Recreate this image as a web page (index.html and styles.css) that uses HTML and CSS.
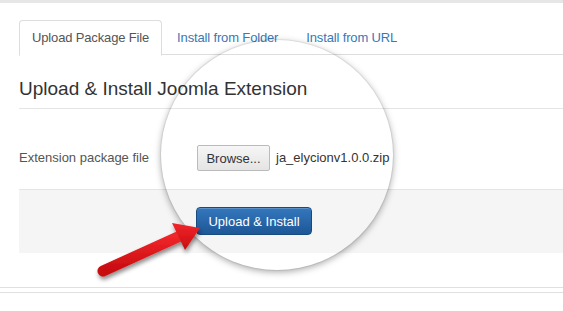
FILE: index.html
```html
<!DOCTYPE html>
<html lang="en">
<head>
    <meta charset="UTF-8">
    <meta name="viewport" content="width=device-width, initial-scale=1.0">
    <title>Extensions: Install</title>
    <link rel="stylesheet" href="styles.css">
</head>
<body>
    <div class="topbar"></div>

    <div class="content">
        <ul class="nav-tabs">
            <li class="active"><a href="#package">Upload Package File</a></li>
            <li><a href="#folder">Install from Folder</a></li>
            <li><a href="#url">Install from URL</a></li>
        </ul>

        <form class="install-form">
            <h2 class="legend">Upload &amp; Install Joomla Extension</h2>

            <div class="control-group">
                <label for="installPackage">Extension package file</label>
                <div class="controls">
                    <button type="button" class="btn">Browse...</button>
                    <span class="file-name">ja_elycionv1.0.0.zip</span>
                </div>
            </div>

            <div class="form-actions">
                <button type="submit" class="btn-primary">Upload &amp; Install</button>
            </div>
        </form>
    </div>

    <div class="footer-lines"></div>

    <!-- magnifier + arrow lie over the form -->
    <div class="magnifier"></div>
    <svg class="arrow" width="130" height="90" viewBox="0 0 130 90">
        <defs>
            <filter id="arrowShadow" x="-20%" y="-20%" width="140%" height="150%">
                <feDropShadow dx="1" dy="3" stdDeviation="2" flood-color="#000" flood-opacity="0.45"/>
            </filter>
            <linearGradient id="arrowFill" x1="0" y1="0" x2="0" y2="1">
                <stop offset="0" stop-color="#f0262a"/>
                <stop offset="1" stop-color="#c80c10"/>
            </linearGradient>
        </defs>
        <g filter="url(#arrowShadow)">
            <line x1="13" y1="71" x2="90" y2="36" stroke="url(#arrowFill)" stroke-width="11" stroke-linecap="round"/>
            <polygon points="82,23 110,28 95,50" fill="url(#arrowFill)"/>
        </g>
    </svg>
</body>
</html>
```

FILE: styles.css
```css
* {
    box-sizing: border-box;
    margin: 0;
    padding: 0;
}

body {
    font-family: "Liberation Sans", Arial, sans-serif;
    font-size: 13px;
    line-height: 18px;
    color: #333;
    background-color: #fff;
    width: 563px;
    height: 311px;
    overflow: hidden;
    position: relative;
}

.topbar {
    height: 3px;
    background-color: #e6e6e6;
}

.content {
    padding-left: 19px;
    padding-top: 17px;
}

.nav-tabs {
    list-style: none;
    display: flex;
    border-bottom: 1px solid #ddd;
    height: 35px;
}

.nav-tabs li {
    margin-right: 2px;
    margin-bottom: -1px;
}

.nav-tabs a {
    display: block;
    padding: 8px 12px;
    line-height: 18px;
    letter-spacing: -0.15px;
    border: 1px solid transparent;
    border-radius: 4px 4px 0 0;
    color: #3a77b5;
    text-decoration: none;
}

.nav-tabs .active a {
    color: #555;
    background-color: #fff;
    border-color: #ddd #ddd transparent;
}

.legend {
    font-size: 19px;
    font-weight: normal;
    color: #333;
    line-height: 24px;
    margin-top: 22px;
    padding-bottom: 7px;
    border-bottom: 1px solid #e5e5e5;
}

.control-group {
    display: flex;
    align-items: center;
    margin-top: 36px;
    margin-bottom: 18px;
}

.control-group label {
    width: 178px;
    color: #555;
}

.controls {
    display: flex;
    align-items: center;
    gap: 6px;
}

.btn {
    font-family: inherit;
    font-size: 13px;
    color: #333;
    height: 26px;
    width: 73px;
    border: 1px solid #bbb;
    border-radius: 2px;
    background: linear-gradient(#f6f6f6, #e4e4e4);
    cursor: pointer;
}

.file-name {
    color: #333;
}

.form-actions {
    background-color: #f5f5f5;
    border-top: 1px solid #e5e5e5;
    padding: 17px 0 17px 177px;
    height: 64px;
}

.btn-primary {
    font-family: inherit;
    font-size: 13px;
    color: #fff;
    width: 116px;
    height: 28px;
    border: 1px solid #174a7e;
    border-radius: 4px;
    background: linear-gradient(#3477bd, #1d5796);
    box-shadow: inset 0 1px 0 rgba(255, 255, 255, 0.2);
    cursor: pointer;
}

.footer-lines {
    margin-top: 34px;
    height: 6px;
    border-top: 1px solid #e0e0e0;
    border-bottom: 1px solid #e0e0e0;
}

.magnifier {
    position: absolute;
    left: 161px;
    top: 40px;
    width: 232px;
    height: 230px;
    border-radius: 50%;
    box-shadow: 0 0 0 1px rgba(0, 0, 0, 0.06), 0 2px 7px rgba(0, 0, 0, 0.35);
    pointer-events: none;
}

.arrow {
    position: absolute;
    left: 90px;
    top: 200px;
}
```
